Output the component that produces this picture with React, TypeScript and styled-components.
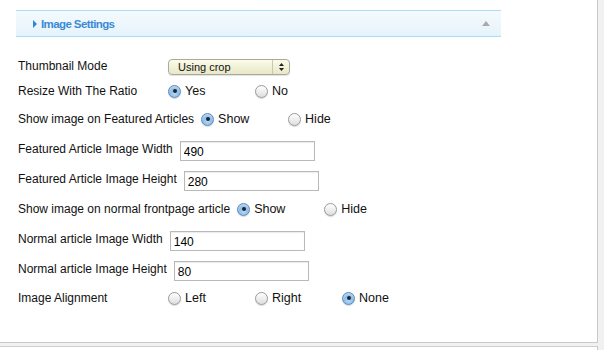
import React, { useState } from 'react';
import styled, { createGlobalStyle } from 'styled-components';

const GlobalStyle = createGlobalStyle`
    html, body {
        margin: 0;
        padding: 0;
        background: #f1f1f1;
        font-family: "Liberation Sans", Arial, sans-serif;
    }
`;

const Page = styled.div`
    width: 604px;
    height: 350px;
    overflow: hidden;
    background: #f1f1f1;
`;

const Panel = styled.div`
    width: 598px;
    height: 343px;
    box-sizing: border-box;
    background: #fff;
    border-right: 1px solid #c9c9c9;
    border-bottom: 1px solid #c9c9c9;
    padding: 10px 0 0 16px;
`;

const NextPanel = styled.div`
    width: 598px;
    height: 10px;
    margin-top: 3px;
    box-sizing: border-box;
    background: #fff;
    border-top: 1px solid #cdcdcd;
    border-right: 1px solid #c9c9c9;
`;

const Header = styled.div`
    width: 485px;
    height: 27px;
    box-sizing: border-box;
    display: flex;
    align-items: center;
    padding: 0 11px 0 17px;
    border-top: 1px solid #acdcf3;
    border-bottom: 1px solid #acdcf3;
    background: linear-gradient(#f4fafd, #e6f3fb);
`;

const Title = styled.div`
    flex: 1;
    display: flex;
    align-items: center;
    gap: 4px;
    color: #3a8ad6;
    font-size: 11.5px;
    font-weight: bold;
    letter-spacing: -0.6px;
`;

const Form = styled.div`
    display: flex;
    flex-direction: column;
    margin: 17px 0 0 2px;
    font-size: 12px;
    color: #111;
`;

const Row = styled.div<{ $h?: number }>`
    height: ${(p) => p.$h ?? 30}px;
    display: flex;
    align-items: center;
`;

const Label = styled.span`
    display: inline-block;
    min-width: 143px;
    padding-right: 7px;
    white-space: nowrap;
`;

const TextInput = styled.input`
    width: 135px;
    height: 20px;
    box-sizing: border-box;
    border: 1px solid #b9b9b9;
    box-shadow: inset 0 1px 1px rgba(0, 0, 0, 0.08);
    padding: 2px 3px 0;
    font: 12px "Liberation Sans", Arial, sans-serif;
    color: #000;
    outline: none;
    margin-top: 4px;
`;

const Select = styled.div`
    width: 122px;
    height: 16px;
    box-sizing: border-box;
    display: flex;
    align-items: center;
    border: 1px solid #a9a9a0;
    border-radius: 4px;
    background: linear-gradient(#fbfbea, #e8e8c6);
    box-shadow: 0 1px 1px rgba(0, 0, 0, 0.12);
    font-size: 11px;
    margin-top: 2px;
`;

const SelectText = styled.span`
    flex: 1;
    padding-left: 9px;
`;

const SelectArrows = styled.span`
    width: 16px;
    height: 100%;
    border-left: 1px solid #c9c9b0;
    display: flex;
    align-items: center;
    justify-content: center;
`;

const Option = styled.label`
    width: 87px;
    display: flex;
    align-items: center;
    gap: 4px;
    cursor: pointer;
    font-size: 12.5px;
`;

const RadioDot = styled.span<{ $on: boolean }>`
    width: 13px;
    height: 13px;
    box-sizing: border-box;
    border-radius: 50%;
    display: flex;
    align-items: center;
    justify-content: center;
    border: 1px solid ${(p) => (p.$on ? '#5b86b5' : '#9a9a9a')};
    background: ${(p) =>
        p.$on
            ? 'radial-gradient(circle at 50% 70%, #b5d7f6 0%, #8dbdea 45%, #d6e8f8 100%)'
            : 'linear-gradient(#ffffff, #dedede)'};
    box-shadow: 0 1px 1px rgba(0, 0, 0, 0.15);

    &::after {
        content: '';
        width: 4px;
        height: 4px;
        border-radius: 50%;
        background: #1d2630;
        display: ${(p) => (p.$on ? 'block' : 'none')};
    }
`;

type RadioGroupProps = {
    options: string[];
    value: string;
    onChange: (v: string) => void;
};

function RadioGroup({ options, value, onChange }: RadioGroupProps) {
    return (
        <>
            {options.map((o) => (
                <Option key={o} onClick={() => onChange(o)}>
                    <RadioDot $on={value === o} />
                    {o}
                </Option>
            ))}
        </>
    );
}

function ImageSettings() {
    const [ratio, setRatio] = useState('Yes');
    const [featured, setFeatured] = useState('Show');
    const [frontpage, setFrontpage] = useState('Show');
    const [align, setAlign] = useState('None');
    const [fw, setFw] = useState('490');
    const [fh, setFh] = useState('280');
    const [nw, setNw] = useState('140');
    const [nh, setNh] = useState('80');

    return (
        <Panel>
            <Header>
                <Title>
                    <svg width="4" height="8" viewBox="0 0 4 8">
                        <path d="M0 0 L4 4 L0 8 Z" fill="#2f86d4" />
                    </svg>
                    Image Settings
                </Title>
                <svg width="8" height="5" viewBox="0 0 8 5">
                    <path d="M0 5 L4 0 L8 5 Z" fill="#a9a9a9" />
                </svg>
            </Header>
            <Form>
                <Row $h={24}>
                    <Label>Thumbnail Mode</Label>
                    <Select>
                        <SelectText>Using crop</SelectText>
                        <SelectArrows>
                            <svg width="5" height="8" viewBox="0 0 5 8">
                                <path d="M0 3 L2.5 0 L5 3 Z M0 5 L2.5 8 L5 5 Z" fill="#222" />
                            </svg>
                        </SelectArrows>
                    </Select>
                </Row>
                <Row $h={26}>
                    <Label>Resize With The Ratio</Label>
                    <RadioGroup options={['Yes', 'No']} value={ratio} onChange={setRatio} />
                </Row>
                <Row>
                    <Label>Show image on Featured Articles</Label>
                    <RadioGroup options={['Show', 'Hide']} value={featured} onChange={setFeatured} />
                </Row>
                <Row>
                    <Label>Featured Article Image Width</Label>
                    <TextInput value={fw} onChange={(e) => setFw(e.target.value)} />
                </Row>
                <Row>
                    <Label>Featured Article Image Height</Label>
                    <TextInput value={fh} onChange={(e) => setFh(e.target.value)} />
                </Row>
                <Row>
                    <Label>Show image on normal frontpage article</Label>
                    <RadioGroup options={['Show', 'Hide']} value={frontpage} onChange={setFrontpage} />
                </Row>
                <Row>
                    <Label>Normal article Image Width</Label>
                    <TextInput value={nw} onChange={(e) => setNw(e.target.value)} />
                </Row>
                <Row>
                    <Label>Normal article Image Height</Label>
                    <TextInput value={nh} onChange={(e) => setNh(e.target.value)} />
                </Row>
                <Row $h={28}>
                    <Label>Image Alignment</Label>
                    <RadioGroup options={['Left', 'Right', 'None']} value={align} onChange={setAlign} />
                </Row>
            </Form>
        </Panel>
    );
}

export default function App() {
    return (
        <Page>
            <GlobalStyle />
            <ImageSettings />
            <NextPanel />
        </Page>
    );
}
